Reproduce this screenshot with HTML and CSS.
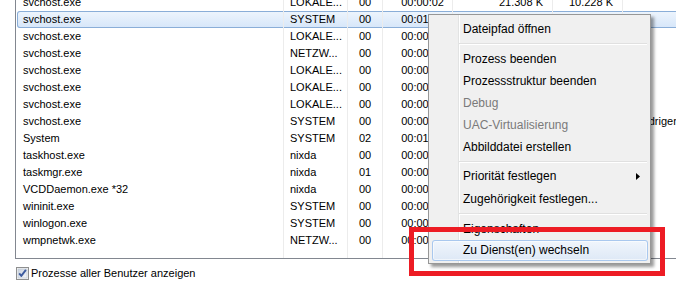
FILE: index.html
```html
<!DOCTYPE html>
<html lang="de">
<head>
<meta charset="utf-8">
<title>Task-Manager Prozesse</title>
<link rel="stylesheet" href="styles.css">
</head>
<body>
<div class="screen">
  <div class="listbox">
    <div class="row"><span class="c name">svchost.exe</span><span class="c user">LOKALE...</span><span class="c cpu">00</span><span class="c time">00:00:02</span><span class="c mem">21.308 K</span><span class="c mem">10.228 K</span><span class="c desc"></span></div>
    <div class="row selected"><span class="c name">svchost.exe</span><span class="c user">SYSTEM</span><span class="c cpu">00</span><span class="c time">00:01:14</span><span class="c mem"></span><span class="c mem"></span><span class="c desc"></span></div>
    <div class="row"><span class="c name">svchost.exe</span><span class="c user">LOKALE...</span><span class="c cpu">00</span><span class="c time">00:00:09</span><span class="c mem"></span><span class="c mem"></span><span class="c desc"></span></div>
    <div class="row"><span class="c name">svchost.exe</span><span class="c user">NETZW...</span><span class="c cpu">00</span><span class="c time">00:00:03</span><span class="c mem"></span><span class="c mem"></span><span class="c desc"></span></div>
    <div class="row"><span class="c name">svchost.exe</span><span class="c user">LOKALE...</span><span class="c cpu">00</span><span class="c time">00:00:01</span><span class="c mem"></span><span class="c mem"></span><span class="c desc"></span></div>
    <div class="row"><span class="c name">svchost.exe</span><span class="c user">LOKALE...</span><span class="c cpu">00</span><span class="c time">00:00:00</span><span class="c mem"></span><span class="c mem"></span><span class="c desc"></span></div>
    <div class="row"><span class="c name">svchost.exe</span><span class="c user">LOKALE...</span><span class="c cpu">00</span><span class="c time">00:00:00</span><span class="c mem"></span><span class="c mem"></span><span class="c desc"></span></div>
    <div class="row"><span class="c name">svchost.exe</span><span class="c user">SYSTEM</span><span class="c cpu">00</span><span class="c time">00:00:00</span><span class="c mem"></span><span class="c mem"></span><span class="c desc">niedrigen</span></div>
    <div class="row"><span class="c name">System</span><span class="c user">SYSTEM</span><span class="c cpu">02</span><span class="c time">00:01:37</span><span class="c mem"></span><span class="c mem"></span><span class="c desc"></span></div>
    <div class="row"><span class="c name">taskhost.exe</span><span class="c user">nixda</span><span class="c cpu">00</span><span class="c time">00:00:01</span><span class="c mem"></span><span class="c mem"></span><span class="c desc"></span></div>
    <div class="row"><span class="c name">taskmgr.exe</span><span class="c user">nixda</span><span class="c cpu">01</span><span class="c time">00:00:02</span><span class="c mem"></span><span class="c mem"></span><span class="c desc"></span></div>
    <div class="row"><span class="c name">VCDDaemon.exe *32</span><span class="c user">nixda</span><span class="c cpu">00</span><span class="c time">00:00:00</span><span class="c mem"></span><span class="c mem"></span><span class="c desc"></span></div>
    <div class="row"><span class="c name">wininit.exe</span><span class="c user">SYSTEM</span><span class="c cpu">00</span><span class="c time">00:00:00</span><span class="c mem"></span><span class="c mem"></span><span class="c desc"></span></div>
    <div class="row"><span class="c name">winlogon.exe</span><span class="c user">SYSTEM</span><span class="c cpu">00</span><span class="c time">00:00:00</span><span class="c mem"></span><span class="c mem"></span><span class="c desc"></span></div>
    <div class="row"><span class="c name">wmpnetwk.exe</span><span class="c user">NETZW...</span><span class="c cpu">00</span><span class="c time">00:00:00</span><span class="c mem"></span><span class="c mem"></span><span class="c desc"></span></div>
    <div class="row filler"><span class="c name"></span><span class="c user"></span><span class="c cpu"></span><span class="c time"></span><span class="c mem"></span><span class="c mem"></span><span class="c desc"></span></div>
  </div>

  <div class="showall">
    <svg class="check" width="13" height="13" viewBox="0 0 13 13" aria-hidden="true">
      <defs>
        <linearGradient id="cbg" x1="0" y1="0" x2="1" y2="1">
          <stop offset="0" stop-color="#cbd3de"/>
          <stop offset="1" stop-color="#f4f6f9"/>
        </linearGradient>
      </defs>
      <rect x="0.5" y="0.5" width="12" height="12" fill="#f4f4f4" stroke="#8e8f8f"/>
      <rect x="2" y="2" width="9" height="9" fill="url(#cbg)" stroke="#b9c3cf" stroke-width="0.6"/>
      <path d="M3.2 6.4 L5.3 8.9 L9.9 2.9" fill="none" stroke="#3d5b9f" stroke-width="1.9" stroke-linejoin="round"/>
    </svg>
    <span>Prozesse aller Benutzer anzeigen</span>
  </div>

  <div class="menu">
    <div class="item">Dateipfad öffnen</div>
    <div class="sep"><div class="sepline"></div></div>
    <div class="item">Prozess beenden</div>
    <div class="item">Prozessstruktur beenden</div>
    <div class="item disabled">Debug</div>
    <div class="item disabled">UAC-Virtualisierung</div>
    <div class="item">Abbilddatei erstellen</div>
    <div class="sep"><div class="sepline"></div></div>
    <div class="item sub"><span>Priorität festlegen</span><svg class="arrow" width="4" height="7" viewBox="0 0 4 7" aria-hidden="true"><path d="M0 0 L4 3.5 L0 7 Z" fill="#000"/></svg></div>
    <div class="item">Zugehörigkeit festlegen...</div>
    <div class="sep"><div class="sepline"></div></div>
    <div class="item">Eigenschaften</div>
    <div class="item hot">Zu Dienst(en) wechseln</div>
  </div>

  <div class="redbox"></div>
</div>
</body>
</html>
```

FILE: styles.css
```css
html, body {
  margin: 0;
  padding: 0;
  background: #ffffff;
  overflow: hidden;
}

.screen {
  position: relative;
  display: flow-root;
  width: 676px;
  height: 288px;
  overflow: hidden;
  background: #ffffff;
  font-family: "Liberation Sans", Arial, sans-serif;
  color: #000000;
}

.listbox {
  margin: -6px 0 0 15px;
  width: 720px;
  height: 264px;
  border-left: 1px solid #828790;
  border-bottom: 1px solid #828790;
  font-size: 11px;
}

.row {
  display: grid;
  grid-template-columns: 267px 64px 35px 70px 100px 70px 1fr;
  height: 17px;
  line-height: 17px;
  white-space: nowrap;
}

.row.filler {
  height: 9px;
}

.row.selected {
  margin-left: 1px;
  grid-template-columns: 266px 64px 35px 70px 100px 70px 1fr;
  background: linear-gradient(#eef5fd, #d6e6f9);
  box-shadow: inset 0 0 0 1px #8aaed8;
  border-radius: 3px;
}

.row.selected .name {
  padding-left: 6px;
}

.c {
  overflow: hidden;
}

.name {
  padding-left: 7px;
}

.user {
  border-left: 1px solid #ececec;
  padding-left: 6px;
}

.cpu {
  border-left: 1px solid #ececec;
  padding-left: 11px;
}

.time {
  border-left: 1px solid #ececec;
  text-align: right;
  padding-right: 8px;
}

.mem {
  border-left: 1px solid #ececec;
  text-align: right;
  padding-right: 9px;
}

.desc {
  border-left: 1px solid #ececec;
  padding-left: 11px;
}

.showall {
  display: flex;
  align-items: center;
  gap: 2px;
  margin-top: 8px;
  padding-left: 16px;
  font-size: 11px;
  line-height: 13px;
}

.check {
  display: block;
  flex: none;
}

.menu {
  position: absolute;
  left: 428px;
  top: 14px;
  width: 223px;
  box-sizing: border-box;
  padding: 2px 2px 2px 3px;
  border: 1px solid #979797;
  background:
    linear-gradient(to right, transparent 29px, #e2e3e3 29px, #e2e3e3 30px, #ffffff 30px, #ffffff 31px, transparent 31px),
    #f0f0f0;
  box-shadow: 3px 3px 3px rgba(0, 0, 0, 0.4);
  font-size: 12px;
}

.item {
  height: 22px;
  line-height: 24px;
  padding-left: 31px;
  white-space: nowrap;
}

.item.disabled {
  color: #7a7a7a;
}

.item.sub {
  display: flex;
  align-items: center;
  justify-content: space-between;
  padding-right: 8px;
}

.item.sub .arrow {
  margin-top: 1px;
}

.arrow {
  display: block;
}

.item.hot {
  margin-top: 1px;
  height: 21px;
  line-height: 21px;
  border-radius: 3px;
  background: linear-gradient(#f1f6fc, #dde8f6);
  box-shadow: inset 0 0 0 1px #a9c8ee, inset 0 0 0 2px rgba(255, 255, 255, 0.55);
}

.sep {
  height: 8px;
  display: flex;
  align-items: center;
  padding-top: 1px;
  box-sizing: border-box;
}

.sepline {
  flex: 1;
  margin-left: 27px;
  margin-right: 1px;
  border-top: 1px solid #e0e0e0;
  border-bottom: 1px solid #ffffff;
}

.redbox {
  position: absolute;
  left: 409px;
  top: 227px;
  width: 256px;
  height: 49px;
  box-sizing: border-box;
  border: 5px solid #ed1c24;
}
```
